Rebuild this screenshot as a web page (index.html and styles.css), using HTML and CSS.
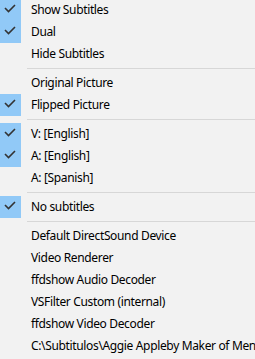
FILE: index.html
```html
<!DOCTYPE html>
<html lang="en">
<head>
  <meta charset="UTF-8" />
  <title>Player Menu</title>
  <link rel="stylesheet" href="styles.css">
</head>
<body>

<div class="menu">
  <div class="item checked"><span class="check"><svg viewBox="0 0 22 22"><polyline points="5,9 8.5,12.5 15,6"/></svg></span><span class="label">Show Subtitles</span></div>
  <div class="item checked"><span class="check"><svg viewBox="0 0 22 22"><polyline points="5,9 8.5,12.5 15,6"/></svg></span><span class="label">Dual</span></div>
  <div class="item"><span class="check"></span><span class="label">Hide Subtitles</span></div>
  <div class="sep"></div>
  <div class="item"><span class="check"></span><span class="label">Original Picture</span></div>
  <div class="item checked"><span class="check"><svg viewBox="0 0 22 22"><polyline points="5,9 8.5,12.5 15,6"/></svg></span><span class="label">Flipped Picture</span></div>
  <div class="sep"></div>
  <div class="item checked"><span class="check"><svg viewBox="0 0 22 22"><polyline points="5,9 8.5,12.5 15,6"/></svg></span><span class="label">V: [English]</span></div>
  <div class="item checked"><span class="check"><svg viewBox="0 0 22 22"><polyline points="5,9 8.5,12.5 15,6"/></svg></span><span class="label">A: [English]</span></div>
  <div class="item"><span class="check"></span><span class="label">A: [Spanish]</span></div>
  <div class="sep"></div>
  <div class="item checked"><span class="check"><svg viewBox="0 0 22 22"><polyline points="5,9 8.5,12.5 15,6"/></svg></span><span class="label">No subtitles</span></div>
  <div class="sep"></div>
  <div class="item"><span class="check"></span><span class="label">Default DirectSound Device</span></div>
  <div class="item"><span class="check"></span><span class="label">Video Renderer</span></div>
  <div class="item"><span class="check"></span><span class="label">ffdshow Audio Decoder</span></div>
  <div class="item"><span class="check"></span><span class="label">VSFilter Custom (internal)</span></div>
  <div class="item"><span class="check"></span><span class="label">ffdshow Video Decoder</span></div>
  <div class="item"><span class="check"></span><span class="label">C:\Subtitulos\Aggie Appleby Maker of Men</span></div>
</div>

</body>
</html>
```

FILE: styles.css
```css
body {
  font-family: "Noto Sans", Arial, sans-serif;
  font-size: 12px;
  letter-spacing: -0.35px;
  color: #000;
  background-color: #f2f2f2;
  margin: 0;
  overflow: hidden;
}
.menu {
  margin-top: -1px;
}
.item {
  display: flex;
  align-items: center;
  height: 22px;
  white-space: nowrap;
}
.check {
  flex: none;
  width: 21px;
  height: 22px;
  margin-right: 10px;
}
.checked .check {
  background-color: #91c9f7;
}
.check svg {
  display: block;
  width: 22px;
  height: 22px;
}
.check polyline {
  fill: none;
  stroke: #333;
  stroke-width: 1.6;
}
.label {
  line-height: 22px;
}
.sep {
  height: 7px;
  margin-left: 27px;
  display: flex;
  align-items: center;
}
.sep::before {
  content: "";
  flex: 1;
  height: 1px;
  background-color: #d7d7d7;
}
```
